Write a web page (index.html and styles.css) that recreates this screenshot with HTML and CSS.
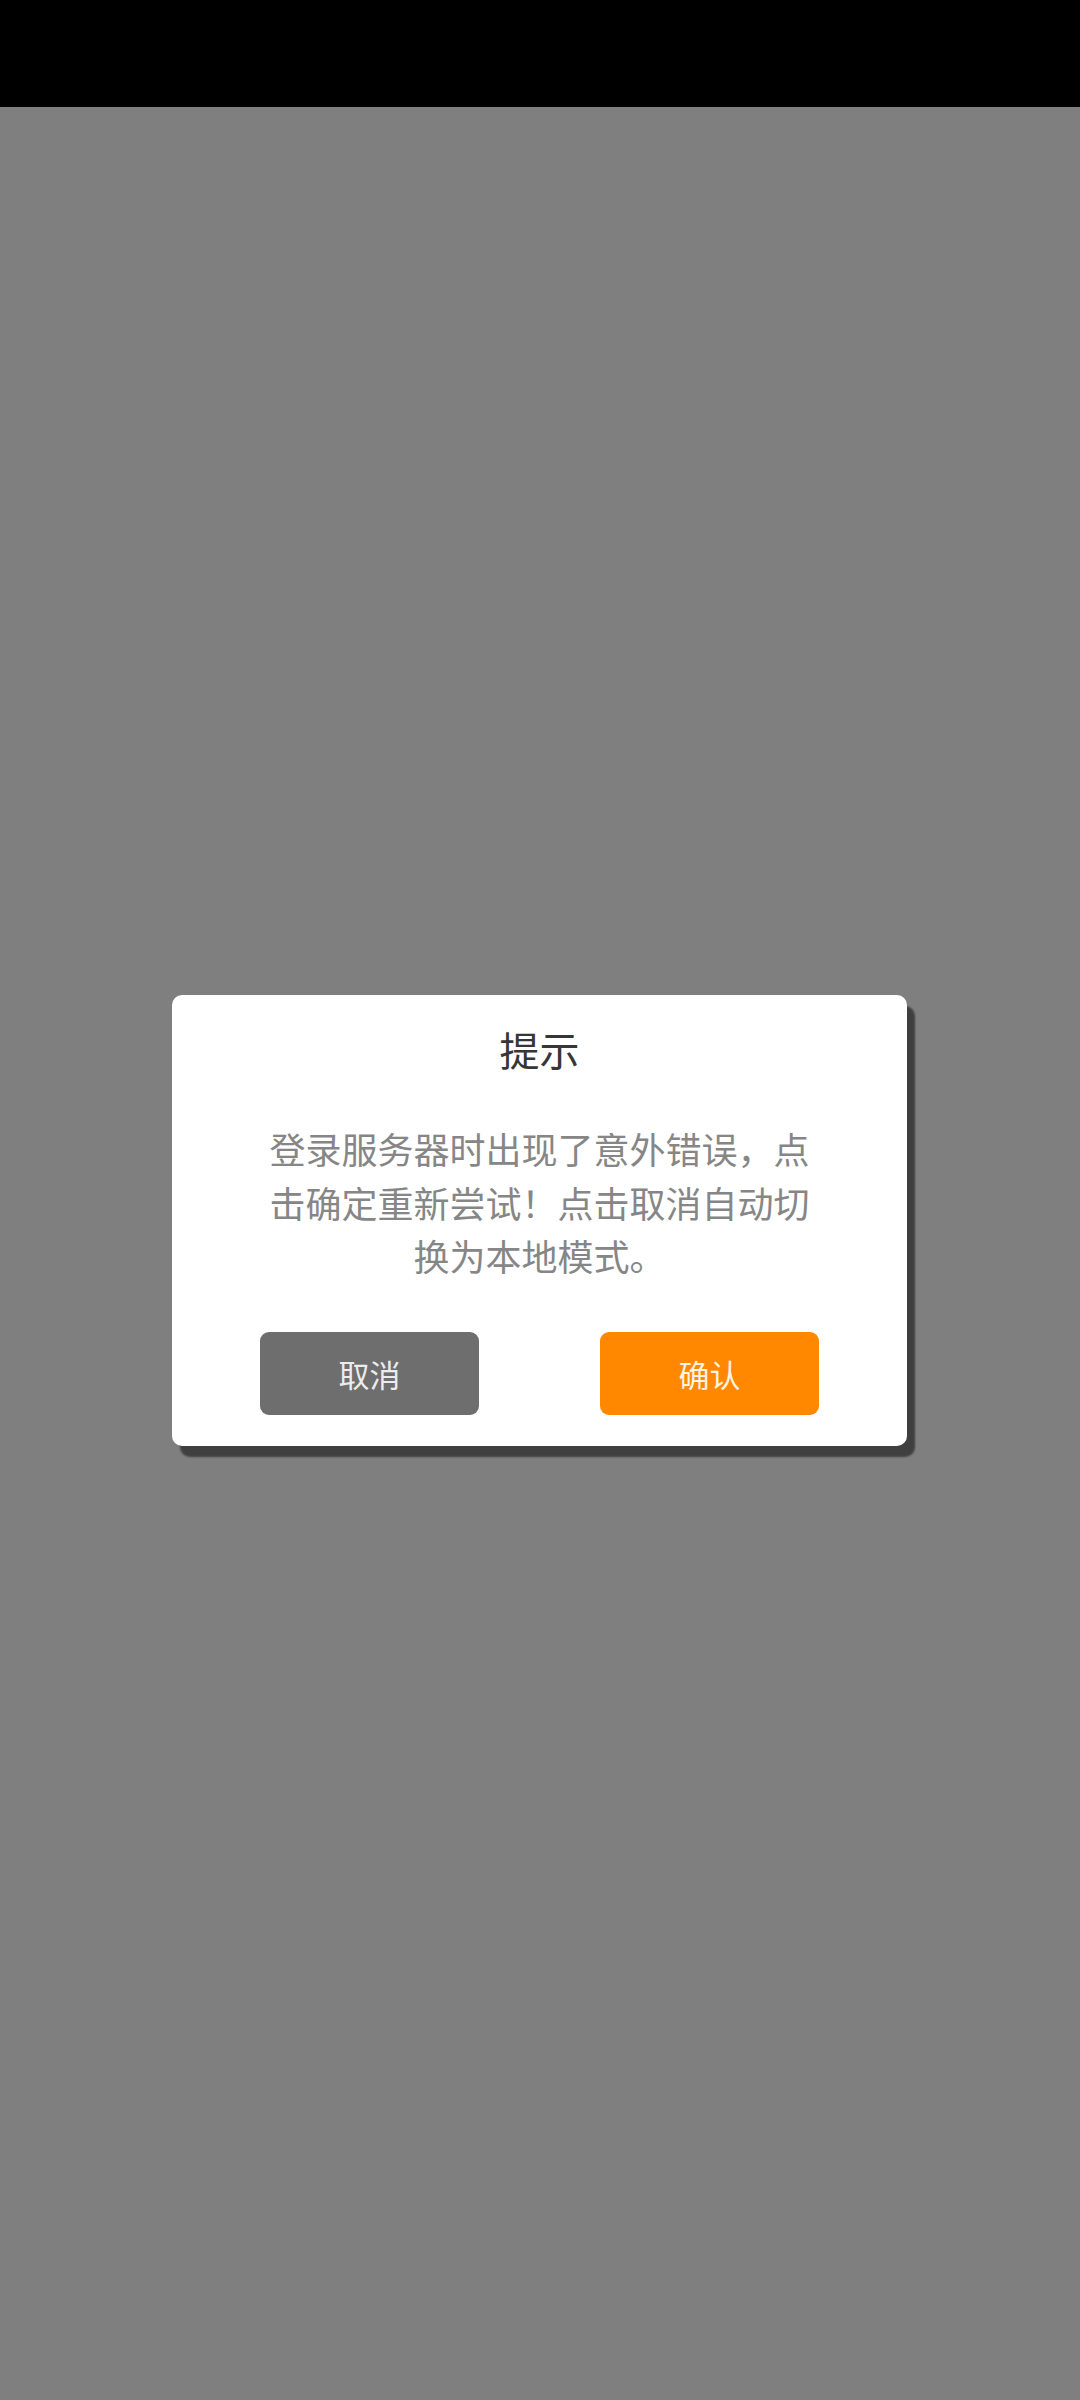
FILE: index.html
```html
<!DOCTYPE html>
<html lang="zh-CN">
<head>
<meta charset="utf-8">
<meta name="viewport" content="width=1080">
<link rel="stylesheet" href="styles.css">
<title>提示</title>
</head>
<body>
<div class="status-bar"></div>
<main class="overlay">
  <section class="dialog">
    <h1 class="dialog-title">提示</h1>
    <p class="dialog-message">登录服务器时出现了意外错误，点击确定重新尝试！点击取消自动切换为本地模式。</p>
    <div class="dialog-actions">
      <button class="btn btn-cancel">取消</button>
      <button class="btn btn-confirm">确认</button>
    </div>
  </section>
</main>
</body>
</html>
```

FILE: styles.css
```css
html, body {
  margin: 0;
  padding: 0;
  height: 100%;
}

body {
  width: 1080px;
  height: 2400px;
  background: #7f7f7f;
  font-family: "Noto Sans CJK SC", "Noto Sans", sans-serif;
  display: flex;
  flex-direction: column;
}

.status-bar {
  height: 107px;
  background: #000;
  flex: none;
}

.overlay {
  flex: 1;
  padding-top: 888px;
}

.dialog {
  box-sizing: border-box;
  width: 735px;
  margin-left: 172px;
  background: #fff;
  border-radius: 10px;
  box-shadow: 8px 11px 2px rgba(0, 0, 0, 0.5);
  padding: 34px 88px 31px;
  display: flex;
  flex-direction: column;
  align-items: center;
}

.dialog-title {
  margin: 0;
  font-size: 40px;
  line-height: 40px;
  font-weight: 400;
  color: #363636;
}

.dialog-message {
  margin: 53px 0 0;
  width: 552px;
  font-size: 36px;
  line-height: 53.5px;
  color: #868686;
  text-align: center;
}

.dialog-actions {
  margin-top: 49px;
  align-self: stretch;
  display: flex;
  justify-content: space-between;
}

.btn {
  width: 219px;
  height: 83px;
  border: none;
  border-radius: 9px;
  font-family: inherit;
  font-size: 31px;
  padding: 0;
}

.btn-cancel {
  background: #6e6e6e;
  color: #ececec;
}

.btn-confirm {
  background: #ff8800;
  color: #fff3e3;
}
```
